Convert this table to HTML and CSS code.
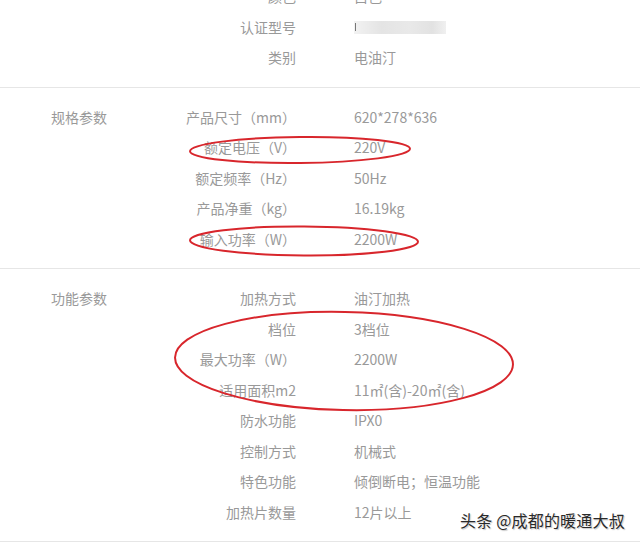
FILE: index.html
```html
<!DOCTYPE html>
<html lang="zh-CN">
<head>
    <meta charset="UTF-8">
    <meta name="viewport" content="width=device-width, initial-scale=1.0">
    <title>规格参数</title>
    <link rel="stylesheet" href="styles.css">
</head>
<body>
    <div class="spec-page">
        <section class="spec-group first">
            <div class="group-title"></div>
            <dl class="spec-list">
                <div class="spec-row"><dt>颜色</dt><dd>白色</dd></div>
                <div class="spec-row"><dt>认证型号</dt><dd><span class="redacted"><span class="redacted-mark"></span></span></dd></div>
                <div class="spec-row"><dt>类别</dt><dd>电油汀</dd></div>
            </dl>
        </section>

        <section class="spec-group">
            <div class="group-title">规格参数</div>
            <dl class="spec-list">
                <div class="spec-row"><dt>产品尺寸（mm）</dt><dd>620*278*636</dd></div>
                <div class="spec-row"><dt>额定电压（V）</dt><dd>220V</dd></div>
                <div class="spec-row"><dt>额定频率（Hz）</dt><dd>50Hz</dd></div>
                <div class="spec-row"><dt>产品净重（kg）</dt><dd>16.19kg</dd></div>
                <div class="spec-row"><dt>输入功率（W）</dt><dd>2200W</dd></div>
            </dl>
        </section>

        <section class="spec-group">
            <div class="group-title">功能参数</div>
            <dl class="spec-list">
                <div class="spec-row"><dt>加热方式</dt><dd>油汀加热</dd></div>
                <div class="spec-row"><dt>档位</dt><dd>3档位</dd></div>
                <div class="spec-row"><dt>最大功率（W）</dt><dd>2200W</dd></div>
                <div class="spec-row"><dt>适用面积m2</dt><dd>11㎡(含)-20㎡(含)</dd></div>
                <div class="spec-row"><dt>防水功能</dt><dd>IPX0</dd></div>
                <div class="spec-row"><dt>控制方式</dt><dd>机械式</dd></div>
                <div class="spec-row"><dt>特色功能</dt><dd>倾倒断电；恒温功能</dd></div>
                <div class="spec-row"><dt>加热片数量</dt><dd>12片以上</dd></div>
            </dl>
        </section>

        <!-- hand-drawn red marks over the table -->
        <svg class="marks" width="640" height="544" viewBox="0 0 640 544">
            <ellipse cx="300" cy="150" rx="110" ry="13" transform="rotate(-0.6 300 150)"/>
            <ellipse cx="304" cy="241" rx="114" ry="14.5" transform="rotate(0.4 304 241)"/>
            <ellipse cx="344" cy="361" rx="169" ry="49" transform="rotate(1.2 344 361)"/>
        </svg>

        <div class="watermark">头条 @成都的暖通大叔</div>
    </div>
</body>
</html>
```

FILE: styles.css
```css
* {
    margin: 0;
    padding: 0;
    box-sizing: border-box;
}

body {
    font-family: "Noto Sans CJK SC", "Noto Sans", sans-serif;
    background: #fff;
    width: 640px;
    height: 544px;
    overflow: hidden;
}

.spec-page {
    position: relative;
    display: flow-root;
    height: 544px;
}

.spec-group {
    display: flex;
    padding: 14px 0 14px 51px;
    border-bottom: 1px solid #e6e6e6;
    font-size: 14px;
    color: #999;
}

.spec-group.first {
    margin-top: -33px;
}

.group-title {
    width: 125px;
    flex-shrink: 0;
    line-height: 30.5px;
}

.spec-list {
    flex: 1;
}

.spec-row {
    display: flex;
    line-height: 30.5px;
    height: 30.5px;
}

.spec-row dt {
    width: 120px;
    text-align: right;
    white-space: nowrap;
}

.spec-row dd {
    margin-left: 58px;
    white-space: nowrap;
}

.redacted {
    display: inline-block;
    position: relative;
    vertical-align: middle;
    width: 92px;
    height: 13px;
    margin-top: -3px;
    background: linear-gradient(90deg, #f2f2f2, #e4e4e4 30%, #e9e9e9 60%, #e2e2e2 85%, #f0f0f0);
    filter: blur(0.6px);
}

.redacted-mark {
    position: absolute;
    left: 1px;
    top: 2px;
    width: 1px;
    height: 8px;
    background: #777;
}

.marks {
    position: absolute;
    left: 0;
    top: 0;
    pointer-events: none;
}

.marks ellipse {
    fill: none;
    stroke: #d8262c;
    stroke-width: 2;
}

.watermark {
    position: absolute;
    left: 460px;
    top: 508px;
    font-size: 16px;
    color: #2a2a2a;
    letter-spacing: 0.2px;
    text-shadow: 0 0 2px #fff, 1px 1px 1px #bbb;
}
```
